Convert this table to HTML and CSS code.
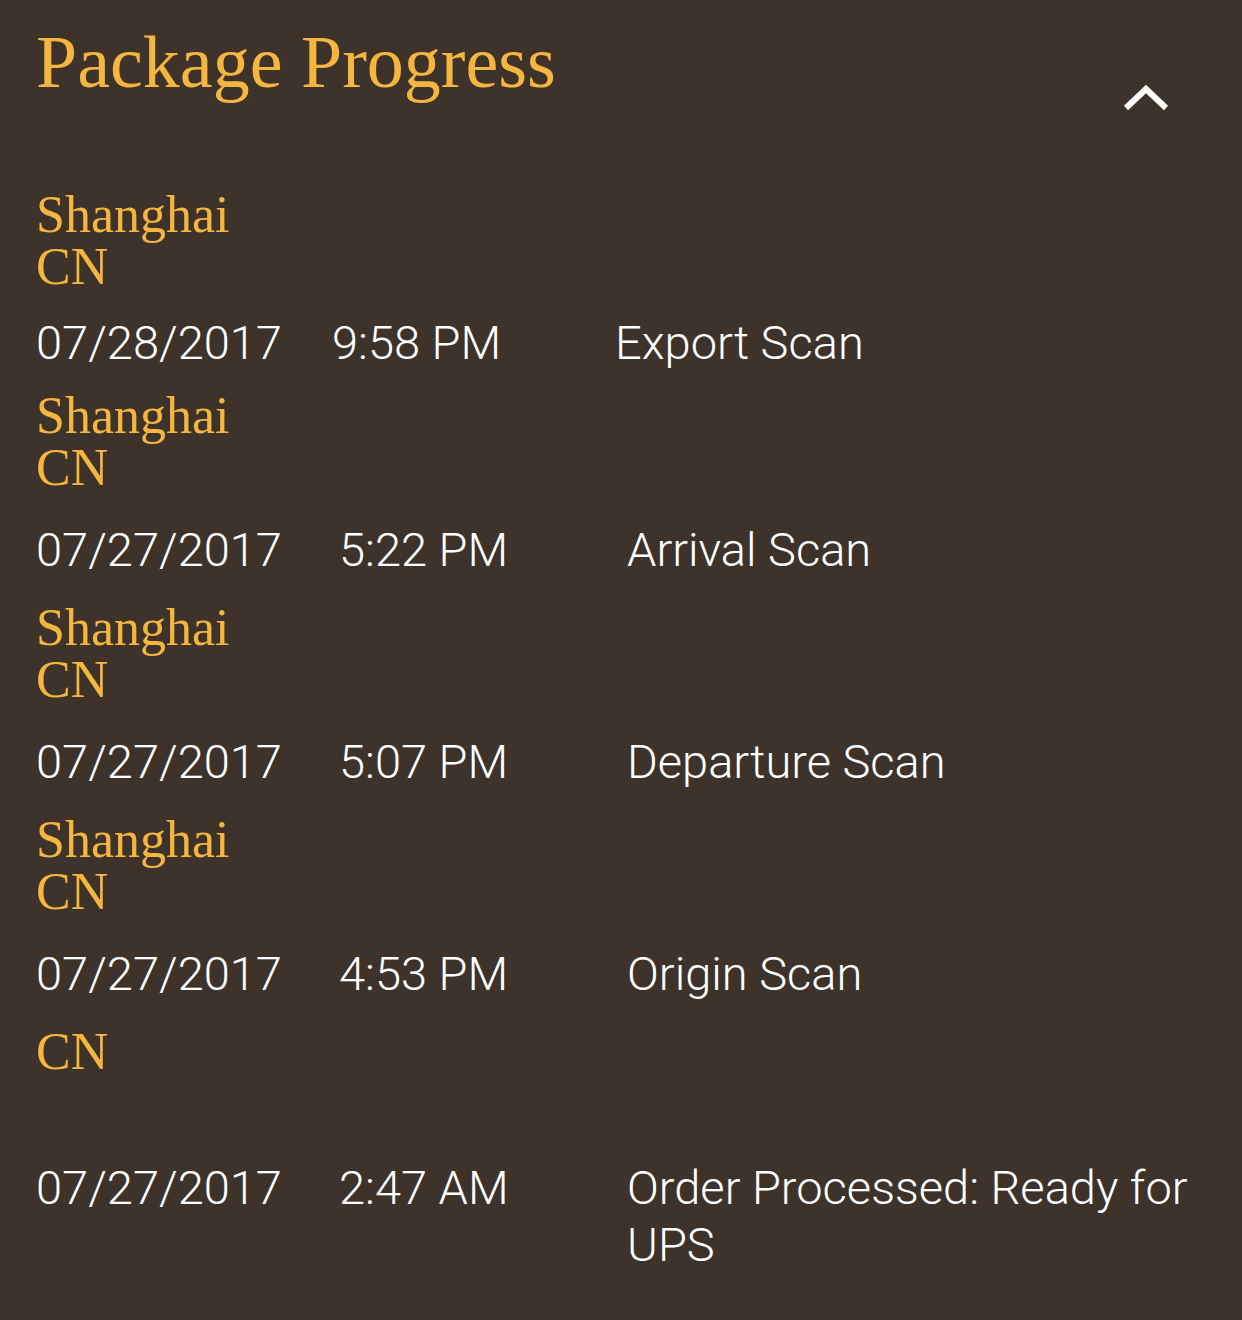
FILE: index.html
```html
<!DOCTYPE html>
<html lang="en">
<head>
    <meta charset="UTF-8">
    <meta name="viewport" content="width=device-width, initial-scale=1.0">
    <title>Package Progress</title>
    <link rel="stylesheet" href="styles.css">
</head>
<body>
    <div class="progress">
        <div class="progress-header">
            <h1>Package Progress</h1>
            <button class="toggle" aria-label="Collapse">
                <svg width="50" height="32" viewBox="0 0 50 32">
                    <polyline points="4,26 24,7 44,26" fill="none" stroke="#ffffff" stroke-width="6"/>
                </svg>
            </button>
        </div>

        <div class="entry">
            <div class="place">
                <div>Shanghai</div>
                <div>CN</div>
            </div>
            <div class="scan scan-first">
                <span>07/28/2017</span>
                <span>9:58 PM</span>
                <span>Export Scan</span>
            </div>
        </div>

        <div class="entry">
            <div class="place">
                <div>Shanghai</div>
                <div>CN</div>
            </div>
            <div class="scan">
                <span>07/27/2017</span>
                <span>5:22 PM</span>
                <span>Arrival Scan</span>
            </div>
        </div>

        <div class="entry">
            <div class="place">
                <div>Shanghai</div>
                <div>CN</div>
            </div>
            <div class="scan">
                <span>07/27/2017</span>
                <span>5:07 PM</span>
                <span>Departure Scan</span>
            </div>
        </div>

        <div class="entry">
            <div class="place">
                <div>Shanghai</div>
                <div>CN</div>
            </div>
            <div class="scan">
                <span>07/27/2017</span>
                <span>4:53 PM</span>
                <span>Origin Scan</span>
            </div>
        </div>

        <div class="entry">
            <div class="place place-nocity">
                <div>CN</div>
            </div>
            <div class="scan">
                <span>07/27/2017</span>
                <span>2:47 AM</span>
                <span>Order Processed: Ready for UPS</span>
            </div>
        </div>
    </div>
</body>
</html>
```

FILE: styles.css
```css
* {
    margin: 0;
    padding: 0;
    box-sizing: border-box;
}

body {
    background-color: #3e332b;
    color: #ffffff;
    min-height: 100vh;
}

.progress {
    padding: 22px 30px 40px 36px;
}

.progress-header {
    display: flex;
    justify-content: space-between;
    align-items: flex-start;
}

.progress-header h1 {
    font-family: 'Liberation Serif', serif;
    font-weight: normal;
    font-size: 74px;
    line-height: 80px;
    color: #f4b63f;
}

.toggle {
    background: none;
    border: none;
    margin-top: 60px;
    margin-right: 40px;
    cursor: pointer;
}

.toggle svg {
    display: block;
}

.progress-header + .entry {
    margin-top: 75px;
}

.place {
    font-family: 'Liberation Serif', serif;
    font-size: 52px;
    line-height: 52px;
    color: #f4b63f;
}

.place-nocity {
    padding-bottom: 54px;
}

.scan {
    display: grid;
    grid-template-columns: 303px 288px 1fr;
    font-family: Roboto, 'Liberation Sans', sans-serif;
    font-weight: 300;
    font-size: 47px;
    line-height: 57px;
    margin: 27px 0 24px;
}

.scan-first {
    grid-template-columns: 296px 283px 1fr;
    margin: 21px 0 19px;
}
```
